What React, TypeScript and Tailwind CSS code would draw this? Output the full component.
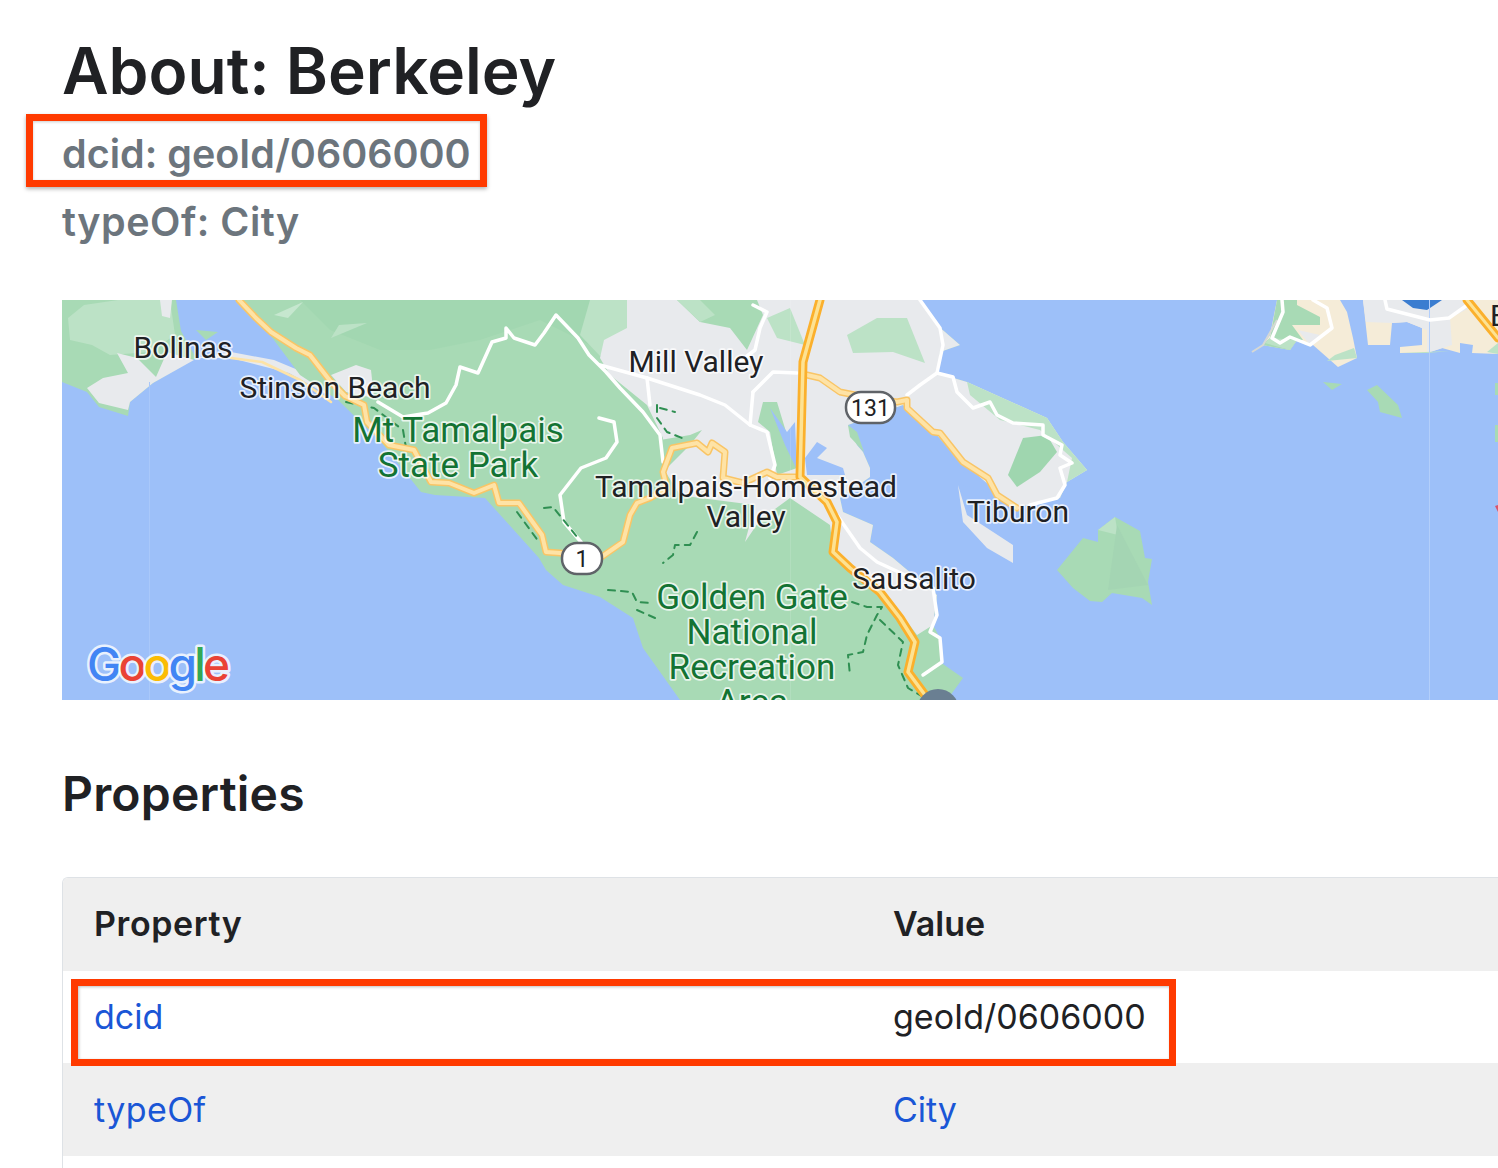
const Line = ({ d, c, w, dash }: { d: string; c: string; w: number; dash?: string }) => (
  <polyline points={d} fill="none" stroke={c} strokeWidth={w} strokeLinejoin="round" strokeLinecap="round" strokeDasharray={dash} />
);

const Road = ({ d, w = 7 }: { d: string; w?: number }) => (
  <>
    <Line d={d} c="#f9c566" w={w} />
    <Line d={d} c="#fee3a6" w={w - 3} />
  </>
);

const Freeway = ({ d }: { d: string }) => (
  <>
    <Line d={d} c="#fbb02c" w={9} />
    <Line d={d} c="#fde293" w={3.5} />
  </>
);

const Label = ({ x, y, children, green }: { x: number; y: number; children: string; green?: boolean }) => (
  <text
    x={x}
    y={y}
    textAnchor="middle"
    fontFamily="Roboto, sans-serif"
    fontSize={green ? 35 : 30}
    fill={green ? "#137333" : "#202124"}
    stroke="#ffffff"
    strokeOpacity="0.75"
    strokeWidth="3.5"
    strokeLinejoin="round"
    style={{ paintOrder: "stroke" }}
  >
    {children}
  </text>
);

const Shield = ({ x, y, w, h, text }: { x: number; y: number; w: number; h: number; text: string }) => (
  <>
    <rect x={x} y={y} width={w} height={h} rx={15} fill="#ffffff" stroke="#5f6368" strokeWidth="2.5" />
    <text x={x + w / 2} y={y + h / 2 + 8} textAnchor="middle" fontFamily="Roboto, sans-serif" fontSize="23" fill="#202124">
      {text}
    </text>
  </>
);

const trails = [
  "697,532 690,545 675,545 673,555 663,563",
  "608,590 632,592 637,602 650,603",
  "637,610 655,618",
  "852,602 867,607 882,607 877,615 867,635 863,652 848,655 850,675",
  "880,620 903,642 898,665 908,688 925,698",
  "657,405 657,418 667,432 687,440",
  "660,408 675,412",
  "517,512 539,542",
  "544,508 553,507 578,538",
  "346,402 374,408 403,430 406,448",
];

const whiteRoads = [
  "378,402 403,417 428,413 446,403 456,385 460,367 478,373 492,342 506,338 506,328 514,338 535,345 544,333 556,315 578,338 589,355 606,372 620,388 643,412 660,435 663,462",
  "599,418 614,422 617,442 606,458 581,468 560,495 564,522 581,542",
  "647,378 700,395 725,405 750,425 767,432 775,465 770,478",
  "647,378 650,405",
  "753,392 750,425",
  "753,392 773,372 797,373",
  "920,300 940,328 943,345 937,373 920,385 907,395",
  "937,373 953,377 957,392 973,408 990,402 997,415 1013,423 1043,425 1043,435 1062,445 1060,455 1072,463 1060,468 1065,485 1057,498 1030,505",
  "837,515 860,548 877,562 933,588 937,615 930,632 940,638 942,662 923,675",
  "753,305 767,312 760,328 755,350 735,365",
  "600,365 647,378",
  "1282,300 1283,312 1272,338 1280,343 1290,337 1310,345 1332,328 1327,308 1313,300",
  "1385,300 1387,309 1430,320 1449,318 1470,303",
];

function BayMap() {
  return (
    <svg viewBox="62 300 1436 400" className="block h-[400px] w-full" preserveAspectRatio="none">
      <rect x="62" y="300" width="1436" height="400" fill="#9dc0f9" />

      {/* bolinas side */}
      <polygon points="62,300 176,300 181,331 196,358 153,383 130,402 128,416 99,407 87,392 62,382" fill="#a8dab5" />
      <polygon points="70,340 68,318 84,305 118,300 170,300 175,335 150,352 110,355 92,345" fill="#bce2c6" />
      <polygon points="87,388 99,403 128,410 130,402 153,383 194,360 167,352 156,377 137,358 117,353 128,373 103,378" fill="#e8eaed" />
      <polygon points="160,300 172,300 170,318 162,316" fill="#e8eaed" />
      <polygon points="231,358 289,373 328,395 310,375 274,360 231,352 196,358" fill="#e8eaed" />
      <polygon points="196,330 218,332 206,340" fill="#a8dab5" />

      {/* marin */}
      <polygon
        points="236,300 920,300 937,325 960,345 940,352 937,373 967,382 1047,418 1063,442 1087,470 1067,482 1060,498 1013,508 993,488 963,465 937,435 903,405 848,425 857,445 863,452 870,468 870,477 840,498 843,512 873,525 870,542 893,558 937,595 933,625 942,642 940,662 963,678 947,700 680,700 643,648 633,618 600,597 563,585 546,570 539,558 485,498 435,495 421,492 381,442 338,400 300,375 268,332"
        fill="#a8dab5"
      />
      <polygon points="300,300 600,300 590,345 540,320 480,340 430,350 380,350 330,330" fill="#a2d7b1" />
      <polygon points="274,315 303,302 288,318" fill="#c6e7cf" />
      <polygon points="331,338 367,323 339,325" fill="#bce2c6" />
      <polygon points="590,300 628,300 628,330 600,356 580,335" fill="#bce2c6" />
      <polygon points="331,375 356,365 371,370 374,398 346,392" fill="#e8eaed" />

      <polygon
        points="627,300 920,300 937,325 960,345 940,352 937,373 967,382 1047,418 1063,442 1087,470 1067,482 1060,498 1013,508 993,488 963,465 937,435 903,405 848,425 857,445 863,452 870,468 870,477 840,498 843,512 873,525 870,542 893,558 937,595 933,625 917,635 887,595 853,572 833,548 830,525 790,498 760,520 745,542 755,505 700,498 680,495 663,468 663,438 647,405 610,375 600,358 604,340 627,328"
        fill="#e8eaed"
      />
      <polygon points="677,300 700,322 730,328 747,350 763,315 757,300" fill="#a8dab5" />
      <polygon points="677,300 700,322 715,315 700,300" fill="#bce2c6" />
      <polygon points="767,318 790,308 805,345 777,338" fill="#bce2c6" />
      <polygon points="847,335 877,318 907,318 925,363 893,352 853,353" fill="#bce2c6" />
      <polygon points="763,402 777,402 787,435 797,468 777,475 770,432 758,422" fill="#a8dab5" />
      <polygon points="640,420 660,440 690,435 702,430 690,445 665,470 650,470 625,440" fill="#a8dab5" />
      <polygon points="967,382 1047,418 1063,442 1087,470 1067,482 1072,458 1040,430 1000,420 970,395" fill="#bce2c6" />
      <polygon points="1023,438 1047,435 1057,452 1040,472 1017,487 1008,475" fill="#9fd6af" />

      {/* inlets */}
      <polygon points="770,408 787,432 795,422 797,470 785,445" fill="#9dc0f9" />
      <polygon points="805,458 817,442 827,448 817,458 843,468 845,475 807,475" fill="#9dc0f9" />
      <polygon points="848,425 857,432 864,452 850,437" fill="#a8dab5" />
      <polygon points="958,485 967,465 1013,508 1000,497 975,488" fill="#9dc0f9" />
      <polygon points="958,485 967,515 1013,545 1013,563 987,548 963,522" fill="#e8eaed" />

      {/* small islands and the east bay */}
      <polygon points="1323,382 1342,384 1332,390" fill="#a8dab5" />
      <polygon points="1367,390 1377,385 1398,405 1402,418 1380,412 1378,402" fill="#a8dab5" />
      <polygon points="1057,570 1083,538 1098,542 1098,530 1115,517 1140,531 1145,558 1152,559 1148,582 1152,605 1142,598 1112,593 1102,602 1090,601 1073,588" fill="#a8dab5" />
      <polygon points="1098,530 1115,517 1118,535" fill="#bce2c6" />
      <polygon points="1108,590 1117,525 1148,585" fill="#a4d5b3" />
      <polygon points="1277,300 1270,335 1263,345 1290,350 1297,340 1313,345 1338,367 1357,358 1353,338 1347,312 1340,300" fill="#f5ecd8" />
      <polygon points="1277,300 1270,338 1262,345 1290,350 1297,340 1303,340 1292,325 1320,325 1320,317 1297,305 1297,300" fill="#a8dab5" />
      <polygon points="1265,343 1290,350 1297,340 1270,338" fill="#bce2c6" />
      <polygon points="1327,361 1357,358 1354,348 1335,355" fill="#bce2c6" />
      <polygon points="1298,330 1320,335 1310,345" fill="#e8eaed" />
      <polyline points="1277,320 1263,345 1252,352" fill="none" stroke="#d6d8d4" strokeWidth="2" />
      <polygon points="1363,300 1368,345 1390,345 1392,323 1407,322 1422,328 1422,345 1400,347 1400,353 1427,353 1442,348 1460,353 1460,343 1473,345 1472,353 1498,354 1498,300" fill="#f5ecd8" />
      <polygon points="1363,300 1366,322 1392,323 1407,322 1427,330 1427,353 1452,345 1450,318 1475,305 1475,300" fill="#e8eaed" />
      <polygon points="1402,300 1442,300 1427,310 1413,308" fill="#3b7dd0" />
      <polygon points="1400,353 1450,351 1427,353" fill="#bce2c6" />
      <polygon points="1487,352 1498,343 1498,354" fill="#bce2c6" />
      <rect x="1495" y="425" width="3" height="17" fill="#a8dab5" />
      <rect x="1495" y="383" width="3" height="12" fill="#a8dab5" />
      <polygon points="1495,506 1498,505 1498,512" fill="#d9546b" />

      {/* tile seams */}
      <line x1="149.500" y1="382" x2="149.500" y2="700" stroke="#a9c8fa" strokeWidth="1" />
      <line x1="790.500" y1="300" x2="790.500" y2="700" stroke="#ffffff" strokeOpacity="0.12" strokeWidth="1" />
      <line x1="1429.500" y1="300" x2="1429.500" y2="700" stroke="#b3cffb" strokeWidth="1" />

      {whiteRoads.map((d) => (
        <Line key={d} d={d} c="#ffffff" w={3.5} />
      ))}
      {trails.map((d) => (
        <Line key={d} d={d} c="#2f8f52" w={2} dash="7 6" />
      ))}

      {/* spit road */}
      <Line d="231,358 262,362 300,380 331,402" c="#fde3a7" w={2.5} />

      <Road d="239,300 256,318 271,332 296,348 310,355 331,382 345,396 364,405 367,422 389,445 414,450 431,482 449,483 474,493 494,485 499,503 519,503 542,535 546,552 560,553 581,558 600,558 623,542 630,515 637,503 650,498 667,488 663,472 672,448 687,445 697,443 708,452 712,443 725,452 723,478 743,483 767,472 777,477 800,477" />
      <Road d="807,375 820,378 840,392 870,398 897,402 907,400 907,408 933,432 940,433 963,462 988,478 997,495 1017,508" />
      <Freeway d="820,300 803,362 800,477 827,502 837,522 833,552 850,568 880,592 900,618 915,642 908,672 925,695 930,702" />
      <Line d="1467,300 1498,338" c="#fbb02c" w={9} />
      <Line d="1467,300 1498,338" c="#fde293" w={3} />

      <circle cx="938" cy="710" r="21" fill="#6a7f92" />

      <Shield x={562} y={543} w={40} h={31} text="1" />
      <Shield x={846} y={392} w={49} h={31} text="131" />

      <Label x={183} y={358}>Bolinas</Label>
      <Label x={335} y={398}>Stinson Beach</Label>
      <Label x={458} y={442} green>Mt Tamalpais</Label>
      <Label x={458} y={477} green>State Park</Label>
      <Label x={696} y={372}>Mill Valley</Label>
      <Label x={746} y={497}>Tamalpais-Homestead</Label>
      <Label x={746} y={527}>Valley</Label>
      <Label x={1018} y={522}>Tiburon</Label>
      <Label x={914} y={589}>Sausalito</Label>
      <Label x={752} y={609} green>Golden Gate</Label>
      <Label x={752} y={644} green>National</Label>
      <Label x={752} y={679} green>Recreation</Label>
      <Label x={752} y={714} green>Area</Label>
      <text x="1490" y="326" fontFamily="Roboto, sans-serif" fontSize="30" fill="#202124">E</text>

      <text
        x="87"
        y="681"
        fontFamily="Inter, sans-serif"
        fontSize="46"
        fontWeight="500"
        letterSpacing="-2.8"
        stroke="#ffffff"
        strokeOpacity="0.8"
        strokeWidth="5"
        strokeLinejoin="round"
        style={{ paintOrder: "stroke" }}
      >
        <tspan fill="#4285f4">G</tspan>
        <tspan fill="#ea4335">o</tspan>
        <tspan fill="#fbbc04">o</tspan>
        <tspan fill="#4285f4">g</tspan>
        <tspan fill="#34a853">l</tspan>
        <tspan fill="#ea4335">e</tspan>
      </text>
    </svg>
  );
}

export default function App() {
  return (
    <main className="relative h-[1168px] w-full overflow-hidden bg-white pl-[62px] font-['Inter',sans-serif] text-[#202124]">
      <h1 className="pt-[34px] text-[64px] leading-[74px] font-semibold">About: Berkeley</h1>
      <p className="mt-[22px] text-[39.5px] leading-[48px] font-semibold text-[#6c757d]">dcid: geoId/0606000</p>
      <p className="mt-[20px] text-[39.5px] leading-[48px] font-semibold tracking-[0.5px] text-[#6c757d]">typeOf: City</p>

      <div className="mt-[54px]">
        <BayMap />
      </div>

      <h2 className="mt-[64px] text-[48px] leading-[60px] font-semibold tracking-[0.2px]">Properties</h2>

      <div className="mt-[53px] w-[1500px] overflow-hidden rounded-tl-md border-t border-l border-[#dee2e6] text-[34px] leading-[44px]">
        <div className="grid h-[93px] grid-cols-[799px_1fr] items-center bg-[#efefef] pb-[2px] pl-[31px] font-semibold">
          <div className="tracking-[0.6px]">Property</div>
          <div>Value</div>
        </div>
        <div className="grid h-[92px] grid-cols-[799px_1fr] items-center bg-white pl-[31px]">
          <a className="text-[#1a56d6]">dcid</a>
          <div>geoId/0606000</div>
        </div>
        <div className="grid h-[93px] grid-cols-[799px_1fr] items-center bg-[#efefef] pl-[31px] text-[#1a56d6]">
          <a className="tracking-[0.4px]">typeOf</a>
          <a>City</a>
        </div>
        <div className="h-[40px] bg-white" />
      </div>

      <div className="absolute top-[114px] left-[26px] h-[73px] w-[461px] border-[7px] border-[#ff3a00] shadow-[0_2px_4px_rgba(0,0,0,0.3),inset_0_1px_3px_rgba(0,0,0,0.2)]" />
      <div className="absolute top-[979px] left-[71px] h-[87px] w-[1105px] border-[7px] border-[#ff3a00] shadow-[inset_1px_1px_3px_rgba(0,0,0,0.25)]" />
    </main>
  );
}
